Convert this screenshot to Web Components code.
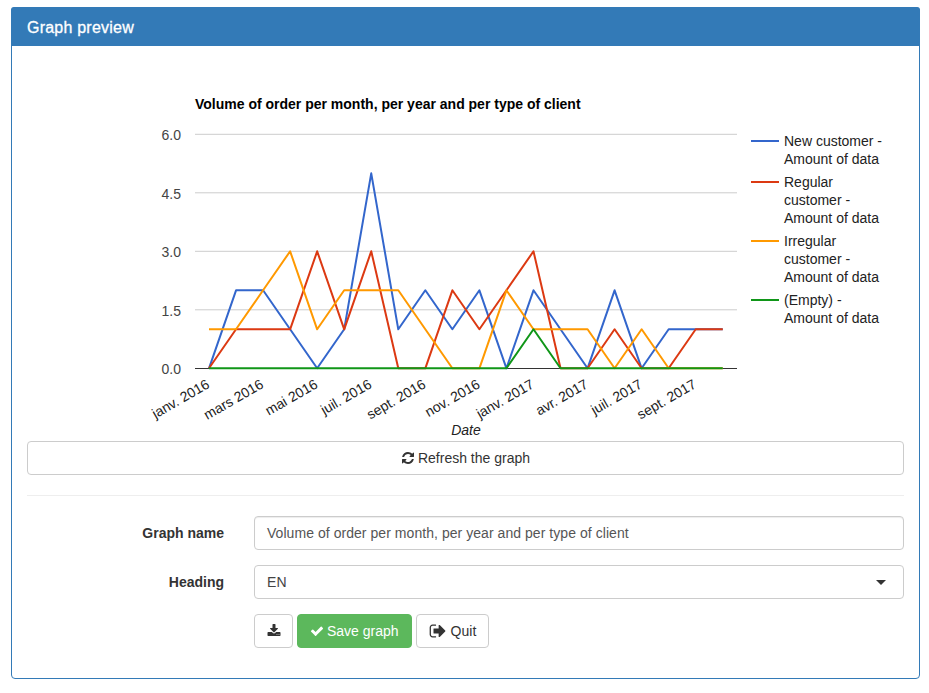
<!DOCTYPE html>
<html lang="en">
<head>
<meta charset="utf-8">
<title>Graph preview</title>
<style>
html,body{margin:0;padding:0;background:#fff}
body{font:14px/20px "Liberation Sans",Arial,sans-serif;color:#333}
</style>
</head>
<body>
<template id="t-panel">
<style>
:host{display:block;margin:7px 9px 0 11px;border:1px solid #337ab7;border-radius:4px;background:#fff}
.head{background:#337ab7;color:#fff;padding:12px 15px 9px 16px;height:18px;line-height:18px;font-size:16px;margin:-1px -1px 0;border-radius:3px 3px 0 0}
.title{-webkit-text-stroke:.3px #fff;letter-spacing:.22px}
.body{padding:15px}
</style>
<div class="head"><span class="title"><slot name="title"></slot></span></div>
<div class="body"><slot></slot></div>
</template>

<template id="t-btn">
<style>
:host{display:inline-flex;box-sizing:border-box;height:34px;align-items:center;justify-content:center;gap:3px;padding:0 12px;border:1px solid #ccc;border-radius:4px;background:#fff;color:#333;font-size:14px;white-space:nowrap}
:host([variant=success]){background:#5cb85c;border-color:#5cb85c;color:#fff}
:host([block]){display:flex}
:host([icon=download]){padding:0 11.5px}
:host([icon=signout]){gap:4px}
:host([icon=signout]) svg{width:18px;height:18px}
svg{width:14px;height:14px;fill:currentColor;display:block}
</style>
<svg viewBox="0 0 1792 1792" aria-hidden="true"><path></path></svg><slot></slot>
</template>

<template id="t-row">
<style>
:host{display:flex;align-items:center;gap:30px;margin-bottom:15px}
.lab{width:197px;flex:none;text-align:right;font-weight:bold;color:#333}
.ctl{flex:1;min-width:0}
</style>
<div class="lab"><slot name="label"></slot></div>
<div class="ctl"><slot></slot></div>
</template>

<template id="t-input">
<style>
:host{display:flex;align-items:center;justify-content:space-between;box-sizing:border-box;height:34px;padding:0 12px;border:1px solid #ccc;border-radius:4px;background:#fff;color:#555;font-size:14px;letter-spacing:.05px;box-shadow:inset 0 1px 1px rgba(0,0,0,.075)}
.caret{display:none;width:0;height:0;border-left:5.5px solid transparent;border-right:5.5px solid transparent;border-top:5.5px solid #333;margin-right:5px}
:host([select]) .caret{display:block}
:host([select]){box-shadow:none;color:#444}
</style>
<slot></slot><span class="caret"></span>
</template>

<template id="t-chart">
<style>
:host{display:block;height:380px}
svg{display:block;width:877px;height:380px;font-family:"Liberation Sans",Arial,sans-serif;font-size:14px}
</style>
<svg xmlns="http://www.w3.org/2000/svg" viewBox="27 61 877 380"></svg>
</template>

<x-panel>
  <span slot="title">Graph preview</span>
  <x-chart></x-chart>
  <x-btn block icon="refresh">Refresh the graph</x-btn>
  <x-rule></x-rule>
  <x-row><span slot="label">Graph name</span><x-input>Volume of order per month, per year and per type of client</x-input></x-row>
  <x-row><span slot="label">Heading</span><x-input select>EN</x-input></x-row>
  <x-row><span slot="label"></span><x-actions>
    <x-btn icon="download"></x-btn>
    <x-btn icon="check" variant="success">Save graph</x-btn>
    <x-btn icon="signout">Quit</x-btn>
  </x-actions></x-row>
</x-panel>

<script>
const ICONS={
refresh:"M1639 1056q0 5-1 7-64 268-268 434.5t-478 166.5q-146 0-282.5-55t-243.5-157l-129 129q-19 19-45 19t-45-19-19-45v-448q0-26 19-45t45-19h448q26 0 45 19t19 45-19 45l-137 137q71 66 161 102t187 36q134 0 250-65t186-179q11-17 53-117 8-23 30-23h192q13 0 22.5 9.5t9.5 22.5zm25-800v448q0 26-19 45t-45 19h-448q-26 0-45-19t-19-45 19-45l138-138q-148-137-349-137-134 0-250 65t-186 179q-11 17-53 117-8 23-30 23h-199q-13 0-22.5-9.5t-9.5-22.5v-7q65-268 270-434.5t480-166.5q146 0 284 55.5t245 156.5l130-129q19-19 45-19t45 19 19 45z",
check:"M1671 566q0 40-28 68l-724 724-136 136q-28 28-68 28t-68-28l-136-136-362-362q-28-28-28-68t28-68l136-136q28-28 68-28t68 28l294 295 656-657q28-28 68-28t68 28l136 136q28 28 28 68z",
signout:"M704 1440q0 4 1 20t.5 26.5-3 23.5-10 19.5-20.5 6.5h-320q-119 0-203.5-84.5t-84.5-203.5v-704q0-119 84.5-203.5t203.5-84.5h320q13 0 22.5 9.5t9.5 22.5q0 4 1 20t.5 26.5-3 23.5-10 19.5-20.5 6.5h-320q-66 0-113 47t-47 113v704q0 66 47 113t113 47h312l11.5 1 11.5 3 8 5.5 7 9 2 13.5zm928-544q0 26-19 45l-544 544q-19 19-45 19t-45-19-19-45v-288h-448q-26 0-45-19t-19-45v-384q0-26 19-45t45-19h448v-288q0-26 19-45t45-19 45 19l544 544q19 19 19 45z",
download:"M1344 1344q0-26-19-45t-45-19-45 19-19 45 19 45 45 19 45-19 19-45zm256 0q0-26-19-45t-45-19-45 19-19 45 19 45 45 19 45-19 19-45zm128-224v320q0 40-28 68t-68 28h-1472q-40 0-68-28t-28-68v-320q0-40 28-68t68-28h465l135 136q58 56 136 56t136-56l136-136h464q40 0 68 28t28 68zm-325-569q17 41-14 70l-448 448q-18 19-45 19t-45-19l-448-448q-31-29-14-70 17-39 59-39h256v-448q0-26 19-45t45-19h256q26 0 45 19t19 45v448h256q42 0 59 39z"
};
class Base extends HTMLElement{
  constructor(){super();const t=document.getElementById(this.constructor.tpl);this.attachShadow({mode:"open"}).appendChild(t.content.cloneNode(true));}
}
class XPanel extends Base{static tpl="t-panel"}
class XRow extends Base{static tpl="t-row"}
class XInput extends Base{static tpl="t-input"}
class XBtn extends Base{
  static tpl="t-btn";
  connectedCallback(){this.shadowRoot.querySelector("path").setAttribute("d",ICONS[this.getAttribute("icon")]);}
}
class XRule extends HTMLElement{
  constructor(){super();this.attachShadow({mode:"open"}).innerHTML='<style>:host{display:block;height:1px;background:#eee;margin:20px 0}</style>';}
}
class XActions extends HTMLElement{
  constructor(){super();this.attachShadow({mode:"open"}).innerHTML='<style>:host{display:flex;gap:4px}</style><slot></slot>';}
}
class XChart extends Base{
  static tpl="t-chart";
  connectedCallback(){
    const X=i=>209+i*27.04, Y=v=>368.3-v*39;
    let s='';
    const txt=(x,y,t,a='')=>`<text x="${x}" y="${y}" ${a}>${t}</text>`;
    s+=txt(195,109,'Volume of order per month, per year and per type of client','font-weight="bold" fill="#000"');
    [[6,'6.0'],[4.5,'4.5'],[3,'3.0'],[1.5,'1.5']].forEach(([v,l])=>{
      s+=`<line x1="195" x2="737" y1="${Y(v)}" y2="${Y(v)}" stroke="#ccc"/>`;
    });
    [[6,'6.0'],[4.5,'4.5'],[3,'3.0'],[1.5,'1.5'],[0,'0.0']].forEach(([v,l])=>{
      s+=txt(181,Math.round(Y(v)+5.7),l,'text-anchor="end" fill="#444"');
    });
    s+=`<line x1="195" x2="737" y1="368.5" y2="368.5" stroke="#333"/>`;
    const series=[
      ['#3366cc',[0,2,2,1,0,1,5,1,2,1,2,0,2,1,0,2,0,1,1,1]],
      ['#dc3912',[0,1,1,1,3,1,3,0,0,2,1,2,3,0,0,1,0,0,1,1]],
      ['#ff9900',[1,1,2,3,1,2,2,2,1,0,0,2,1,1,1,0,1,0,0,0]],
      ['#109618',[0,0,0,0,0,0,0,0,0,0,0,0,1,0,0,0,0,0,0,0]]
    ];
    series.forEach(([c,d])=>{
      s+=`<polyline fill="none" stroke="${c}" stroke-width="2" stroke-linejoin="round" points="${d.map((v,i)=>X(i)+','+Y(v)).join(' ')}"/>`;
    });
    [[0,'janv. 2016'],[2,'mars 2016'],[4,'mai 2016'],[6,'juil. 2016'],[8,'sept. 2016'],[10,'nov. 2016'],[12,'janv. 2017'],[14,'avr. 2017'],[16,'juil. 2017'],[18,'sept. 2017']].forEach(([i,l])=>{
      const x=X(i)+1.5,y=387;
      s+=txt(x,y,l,`text-anchor="end" fill="#222" transform="rotate(-30 ${x} ${y})"`);
    });
    s+=txt(466,435,'Date','text-anchor="middle" font-style="italic" fill="#222"');
    [[141,['New customer -','Amount of data'],'#3366cc'],[182,['Regular','customer -','Amount of data'],'#dc3912'],[241,['Irregular','customer -','Amount of data'],'#ff9900'],[300,['(Empty) -','Amount of data'],'#109618']].forEach(([y,ls,c])=>{
      s+=`<line x1="751" x2="779" y1="${y}" y2="${y}" stroke="${c}" stroke-width="2"/>`;
      ls.forEach((l,k)=>{s+=txt(784,y+5+k*18,l,'fill="#222"');});
    });
    this.shadowRoot.querySelector("svg").innerHTML=s;
  }
}
customElements.define("x-panel",XPanel);
customElements.define("x-row",XRow);
customElements.define("x-input",XInput);
customElements.define("x-btn",XBtn);
customElements.define("x-rule",XRule);
customElements.define("x-actions",XActions);
customElements.define("x-chart",XChart);
</script>
</body>
</html>
